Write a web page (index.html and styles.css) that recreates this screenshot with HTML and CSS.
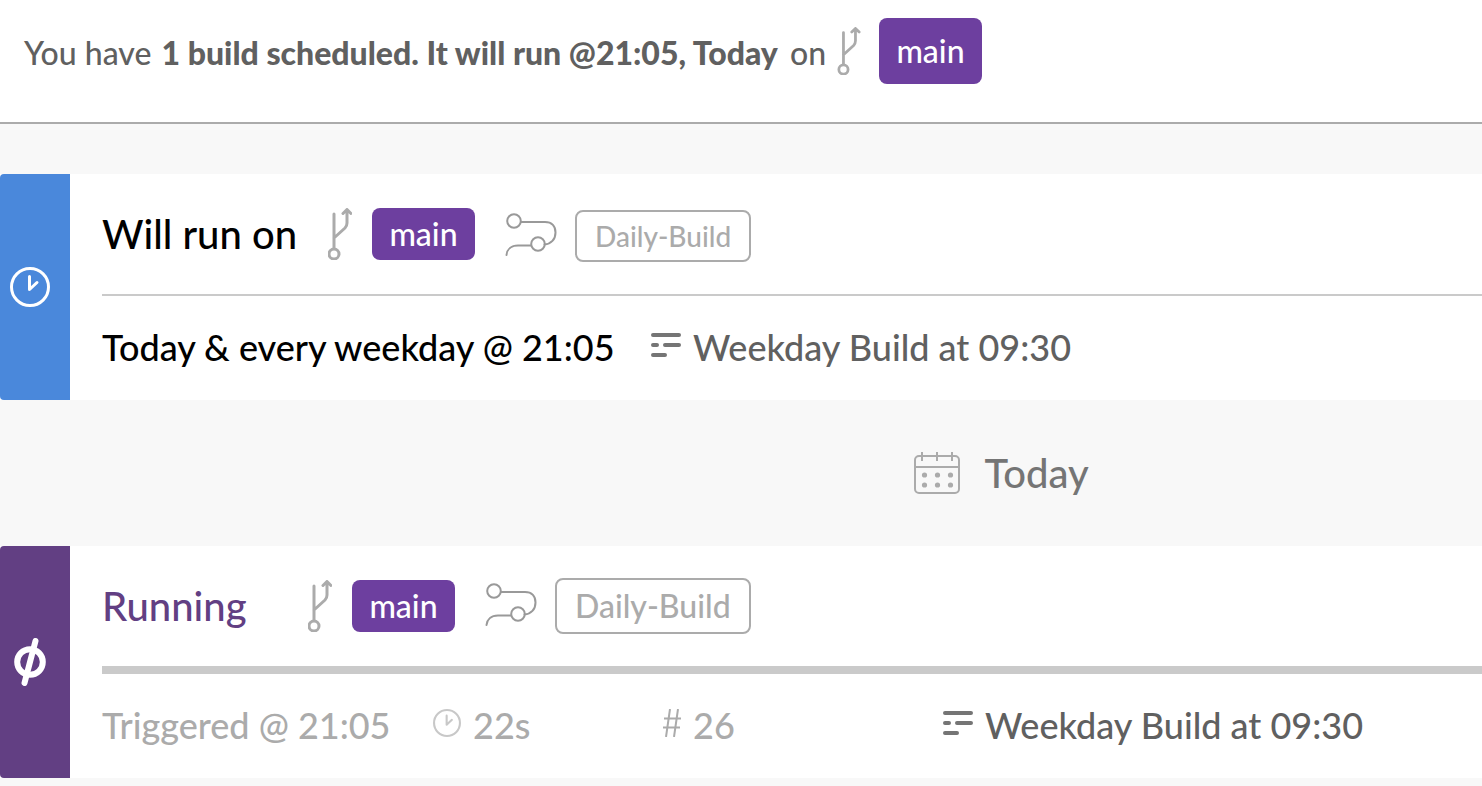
FILE: index.html
```html
<!DOCTYPE html>
<html lang="en">
<head>
<meta charset="utf-8">
<meta name="viewport" content="width=device-width, initial-scale=1">
<title>Builds</title>
<link rel="stylesheet" href="styles.css">
</head>
<body>
<svg class="sprite" aria-hidden="true">
  <symbol id="branch" viewBox="0 0 24 52">
    <path d="M6 6V40M6 30L17 20Q19 18 19 15V2M15 5.500L19 1.500L23 5.500"/>
    <circle cx="6" cy="46" r="5"/>
  </symbol>
  <symbol id="route" viewBox="0 0 52 44">
    <circle cx="9" cy="9" r="6.800"/>
    <path d="M16 10H40C47 10 50.500 14.500 50.500 20.500C50.500 27.500 46 32 39.500 32.500M26 33.500H13C6 33.500 2 37.500 1.500 43"/>
    <circle cx="33" cy="32" r="6.800"/>
  </symbol>
  <symbol id="lines" viewBox="0 0 30 24">
    <path d="M2 2H28M2 12H6M14 12H28M2 22H14"/>
  </symbol>
  <symbol id="clock" viewBox="0 0 40 40">
    <circle cx="20" cy="20" r="18.500"/>
    <path d="M19.500 9.500V22.500L27 15.500"/>
  </symbol>
  <symbol id="calendar" viewBox="0 0 46 42">
    <rect x="1" y="4" width="44" height="37" rx="4"/>
    <path d="M1 15H45M8 0V9M23 0V9M38 0V9"/>
    <g class="dots">
      <circle cx="10.500" cy="23" r="2.600"/><circle cx="23.500" cy="23" r="2.600"/><circle cx="36.500" cy="23" r="2.600"/>
      <circle cx="10.500" cy="33" r="2.600"/><circle cx="23.500" cy="33" r="2.600"/><circle cx="36.500" cy="33" r="2.600"/>
    </g>
  </symbol>
  <symbol id="hash" viewBox="0 0 18 28">
    <path d="M7 0L3 28M15 0L11 28M1 9.500H18M0 18.500H17"/>
  </symbol>
  <symbol id="running" viewBox="0 0 32 48">
    <circle cx="16" cy="24" r="12.800"/>
    <path d="M21.500 3L10.500 45"/>
  </symbol>
</svg>

<header class="notice">
  <p class="notice-text">You have <strong>1 build scheduled. It will run @21:05, Today</strong> on</p>
  <svg class="icon branch branch-small" aria-hidden="true"><use href="#branch"/></svg>
  <a class="tag tag-tall" href="#">main</a>
</header>

<main>
  <article class="card scheduled">
    <div class="status"><svg class="icon clock" role="img" aria-label="Scheduled"><use href="#clock"/></svg></div>
    <div class="body">
      <div class="head">
        <h2 class="title">Will run on</h2>
        <svg class="icon branch" aria-hidden="true"><use href="#branch"/></svg>
        <a class="tag" href="#">main</a>
        <svg class="icon route" aria-hidden="true"><use href="#route"/></svg>
        <a class="workflow workflow-small" href="#">Daily-Build</a>
      </div>
      <div class="foot">
        <span class="when">Today &amp; every weekday @ 21:05</span>
        <span class="item name"><svg class="icon lines" aria-hidden="true"><use href="#lines"/></svg>Weekday Build at 09:30</span>
      </div>
    </div>
  </article>

  <h2 class="day"><svg class="icon calendar" aria-hidden="true"><use href="#calendar"/></svg>Today</h2>

  <article class="card running">
    <div class="status"><svg class="icon run" role="img" aria-label="Running"><use href="#running"/></svg></div>
    <div class="body">
      <div class="head">
        <h2 class="title">Running</h2>
        <svg class="icon branch" aria-hidden="true"><use href="#branch"/></svg>
        <a class="tag" href="#">main</a>
        <svg class="icon route" aria-hidden="true"><use href="#route"/></svg>
        <a class="workflow" href="#">Daily-Build</a>
      </div>
      <div class="foot">
        <span class="when">Triggered @ 21:05</span>
        <span class="item duration"><svg class="icon clock-small" aria-hidden="true"><use href="#clock"/></svg>22s</span>
        <span class="item number"><svg class="icon hash" aria-hidden="true"><use href="#hash"/></svg>26</span>
        <span class="item name"><svg class="icon lines" aria-hidden="true"><use href="#lines"/></svg>Weekday Build at 09:30</span>
      </div>
    </div>
  </article>
</main>
</body>
</html>
```
FILE: styles.css
```css
* { box-sizing: border-box; }

body {
  margin: 0;
  background: #f8f8f8;
  color: #606060;
  font-family: Lato, "Liberation Sans", sans-serif;
  font-weight: 500;
  white-space: nowrap;
  overflow-x: hidden;
}

h2, p { margin: 0; font-weight: inherit; }
a { text-decoration: none; }

.sprite { position: absolute; width: 0; height: 0; }

.icon {
  flex: none;
  fill: none;
  stroke: #ababab;
  stroke-width: 3;
  stroke-linecap: round;
  stroke-linejoin: round;
}
.branch { width: 24px; height: 52px; }
.branch-small { height: 48px; }
.route { width: 52px; height: 44px; margin: 0 -2px 0 10px; stroke: #999; stroke-width: 2; }
.lines { width: 30px; height: 24px; stroke: #757575; stroke-width: 4; }
.clock { width: 40px; height: 40px; stroke: #fff; }
.clock-small { width: 28px; height: 28px; stroke: #c8c8c8; }
.calendar { width: 46px; height: 42px; stroke-width: 2; stroke-linecap: butt; }
.dots { fill: #ababab; stroke: none; }
.hash { width: 18px; height: 28px; stroke-width: 2; stroke-linecap: butt; }
.run { width: 32px; height: 48px; stroke: #fff; stroke-width: 6; }

.notice {
  display: flex;
  align-items: center;
  gap: 6px;
  height: 124px;
  padding: 0 24px 20px;
  background: #fff;
  border-bottom: 2px solid #ababab;
}
.notice-text { min-width: 807px; padding-top: 4px; font-size: 32px; font-weight: 500; line-height: 40px; }
.notice-text strong { padding: 0 4px 0 2px; font-weight: 900; }

.tag {
  flex: none;
  min-width: 103px;
  padding: 0 16px;
  border-radius: 8px;
  background: #6d3f9f;
  color: #fff;
  font-size: 32px;
  line-height: 52px;
  text-align: center;
}
.tag-tall { margin-left: 12px; line-height: 66px; }

main { padding-top: 50px; }

.card { display: flex; background: #fff; }
.status {
  flex: none;
  display: flex;
  align-items: center;
  justify-content: center;
  width: 70px;
  padding-right: 10px;
  border-radius: 4px 0 0 4px;
}
.scheduled .status { background: #4a88db; }
.running .status { background: #623f83; }

.body { flex: 1; min-width: 0; padding-left: 32px; }
.head {
  display: flex;
  align-items: center;
  gap: 20px;
  height: 122px;
  border-bottom: 2px solid #cacaca;
}
.running .head { height: 128px; border-bottom-width: 8px; }
.running .route { margin-bottom: 4px; }
.title { flex: none; width: 206px; font-size: 40px; line-height: 48px; color: #000; }
.running .title { width: 186px; color: #623f83; }

.workflow {
  flex: none;
  padding: 0 18px;
  border: 2px solid #ababab;
  border-radius: 8px;
  color: #ababab;
  font-size: 32px;
  line-height: 52px;
}
.workflow-small { margin-top: 4px; font-size: 28px; line-height: 48px; }

.foot {
  display: flex;
  align-items: center;
  height: 104px;
  padding-bottom: 2px;
  font-size: 36px;
  line-height: 44px;
}
.scheduled .when { flex: none; width: 549px; color: #000; }
.running .when { flex: none; width: 331px; color: #ababab; }
.item { flex: none; display: flex; align-items: center; gap: 12px; }
.item .icon { margin-bottom: 4px; }
.duration { width: 230px; color: #ababab; }
.number { width: 280px; color: #ababab; }

.day {
  display: flex;
  align-items: center;
  gap: 24px;
  height: 146px;
  padding-left: 61.7%;
  color: #757575;
  font-size: 40px;
  line-height: 48px;
}
```
